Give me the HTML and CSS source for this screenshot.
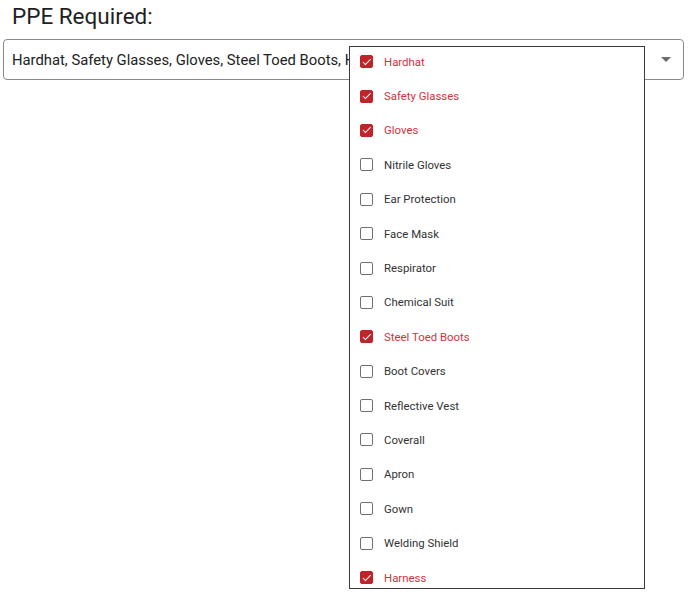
FILE: index.html
```html
<!DOCTYPE html>
<html>
<head>
<meta charset="utf-8">
<link rel="stylesheet" href="styles.css">
</head>
<body>
<div class="field">
  <label class="title">PPE Required:</label>
  <div class="select">
    <span class="value">Hardhat, Safety Glasses, Gloves, Steel Toed Boots, Harness</span>
    <span class="arrow"></span>
  </div>
  <ul class="menu">
    <li class="opt on"><span class="box"></span>Hardhat</li>
    <li class="opt on"><span class="box"></span>Safety Glasses</li>
    <li class="opt on"><span class="box"></span>Gloves</li>
    <li class="opt"><span class="box"></span>Nitrile Gloves</li>
    <li class="opt"><span class="box"></span>Ear Protection</li>
    <li class="opt"><span class="box"></span>Face Mask</li>
    <li class="opt"><span class="box"></span>Respirator</li>
    <li class="opt"><span class="box"></span>Chemical Suit</li>
    <li class="opt on"><span class="box"></span>Steel Toed Boots</li>
    <li class="opt"><span class="box"></span>Boot Covers</li>
    <li class="opt"><span class="box"></span>Reflective Vest</li>
    <li class="opt"><span class="box"></span>Coverall</li>
    <li class="opt"><span class="box"></span>Apron</li>
    <li class="opt"><span class="box"></span>Gown</li>
    <li class="opt"><span class="box"></span>Welding Shield</li>
    <li class="opt on"><span class="box"></span>Harness</li>
  </ul>
</div>
</body>
</html>
```
FILE: styles.css
```css
html, body {
  margin: 0;
  padding: 0;
  background: #fff;
  font-family: Roboto, "Liberation Sans", sans-serif;
  color: #222;
  min-height: 597px;
}
.field {
  position: relative;
  padding: 4px 4px 0 3px;
  height: 593px;
}
.title {
  display: block;
  font-size: 22.5px;
  line-height: 24px;
  padding-left: 9px;
  color: #1f1f1f;
}
.select {
  margin-top: 11px;
  height: 39px;
  border: 1px solid #8a8a8a;
  border-radius: 4px;
  display: flex;
  align-items: center;
  padding: 0 12px 0 8px;
  overflow: hidden;
}
.value {
  flex: 1;
  font-size: 14.8px;
  color: #222;
  white-space: nowrap;
  overflow: hidden;
}
.arrow {
  width: 0;
  height: 0;
  border-left: 5px solid transparent;
  border-right: 5px solid transparent;
  border-top: 5px solid #6b6b6b;
  margin-left: 8px;
}
.menu {
  position: absolute;
  left: 349px;
  top: 46px;
  width: 294px;
  height: 541px;
  margin: 0;
  padding: 0;
  list-style: none;
  border: 1px solid #3a3a3a;
  background: #fff;
  overflow: hidden;
  display: flex;
  flex-direction: column;
}
.opt {
  height: 34.4px;
  flex: none;
  display: flex;
  align-items: center;
  padding-left: 10px;
  font-size: 11.4px;
  color: #333;
}
.opt:first-child {
  margin-top: -2.5px;
}
.box {
  width: 11px;
  height: 11px;
  border: 1.5px solid #707070;
  border-radius: 2px;
  margin-right: 11px;
  flex: none;
  position: relative;
}
.opt.on {
  color: #d0343b;
}
.opt.on .box {
  background: #c1232b;
  border-color: #c1232b;
}
.opt.on .box::after {
  content: "";
  position: absolute;
  left: 3.5px;
  top: 0.5px;
  width: 3px;
  height: 6.5px;
  border-right: 1.6px solid #fff;
  border-bottom: 1.6px solid #fff;
  transform: rotate(45deg);
}
```
